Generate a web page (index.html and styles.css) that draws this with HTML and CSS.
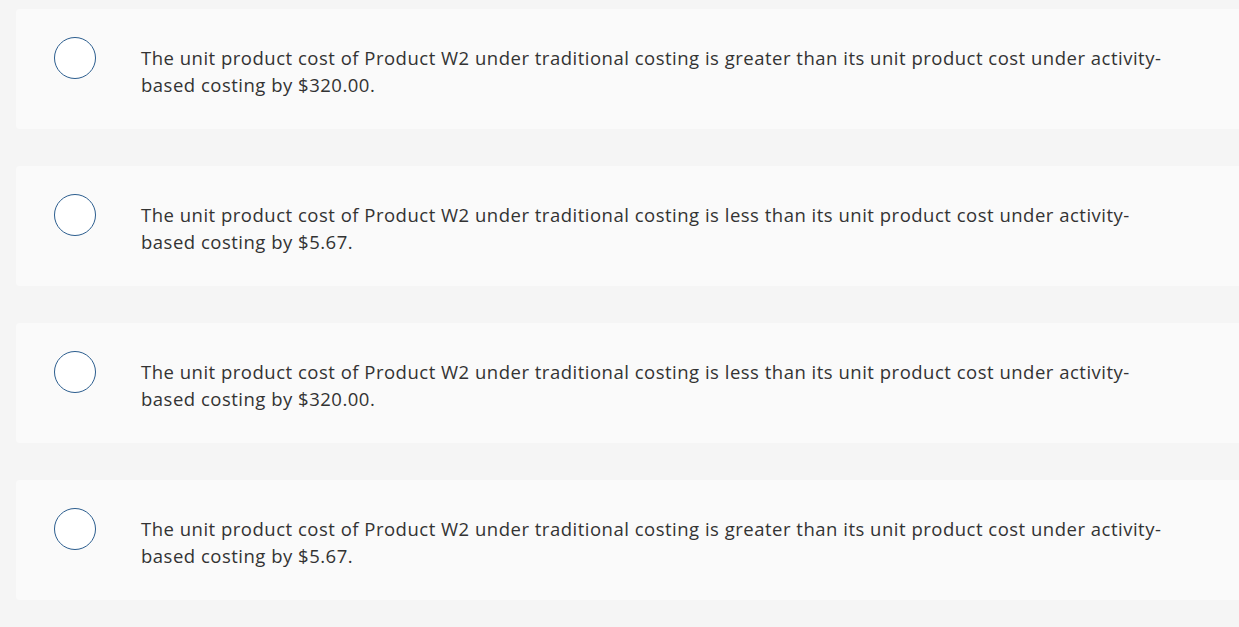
FILE: index.html
```html
<!DOCTYPE html>
<html>
<head>
<meta charset="utf-8">
<link rel="stylesheet" href="styles.css">
</head>
<body>
<div class="list">
  <div class="card">
    <span class="radio"></span>
    <p class="text">The unit product cost of Product W2 under traditional costing is greater than its unit product cost under activity-based costing by $320.00.</p>
  </div>
  <div class="card">
    <span class="radio"></span>
    <p class="text">The unit product cost of Product W2 under traditional costing is less than its unit product cost under activity-based costing by $5.67.</p>
  </div>
  <div class="card">
    <span class="radio"></span>
    <p class="text">The unit product cost of Product W2 under traditional costing is less than its unit product cost under activity-based costing by $320.00.</p>
  </div>
  <div class="card">
    <span class="radio"></span>
    <p class="text">The unit product cost of Product W2 under traditional costing is greater than its unit product cost under activity-based costing by $5.67.</p>
  </div>
</div>
</body>
</html>
```
FILE: styles.css
```css
html, body {
  margin: 0;
  padding: 0;
  background: #f5f5f5;
  overflow: hidden;
}
.list {
  padding: 9px 0 0 16px;
  display: flex;
  flex-direction: column;
  gap: 37px;
  width: 1240px;
}
.card {
  background: #fafafa;
  border-radius: 4px 0 0 4px;
  height: 120px;
  box-sizing: border-box;
  display: flex;
  align-items: flex-start;
  padding: 28px 30px 0 38px;
}
.radio {
  flex: none;
  width: 42px;
  height: 42px;
  box-sizing: border-box;
  border: 1.5px solid #2b5d8e;
  border-radius: 50%;
  background: #fff;
}
.text {
  margin: 7px 0 0 45px;
  font-family: "Open Sans", "Liberation Sans", sans-serif;
  font-size: 18.5px;
  letter-spacing: 0.5px;
  line-height: 27px;
  color: #333;
  width: 1040px;
}
```
